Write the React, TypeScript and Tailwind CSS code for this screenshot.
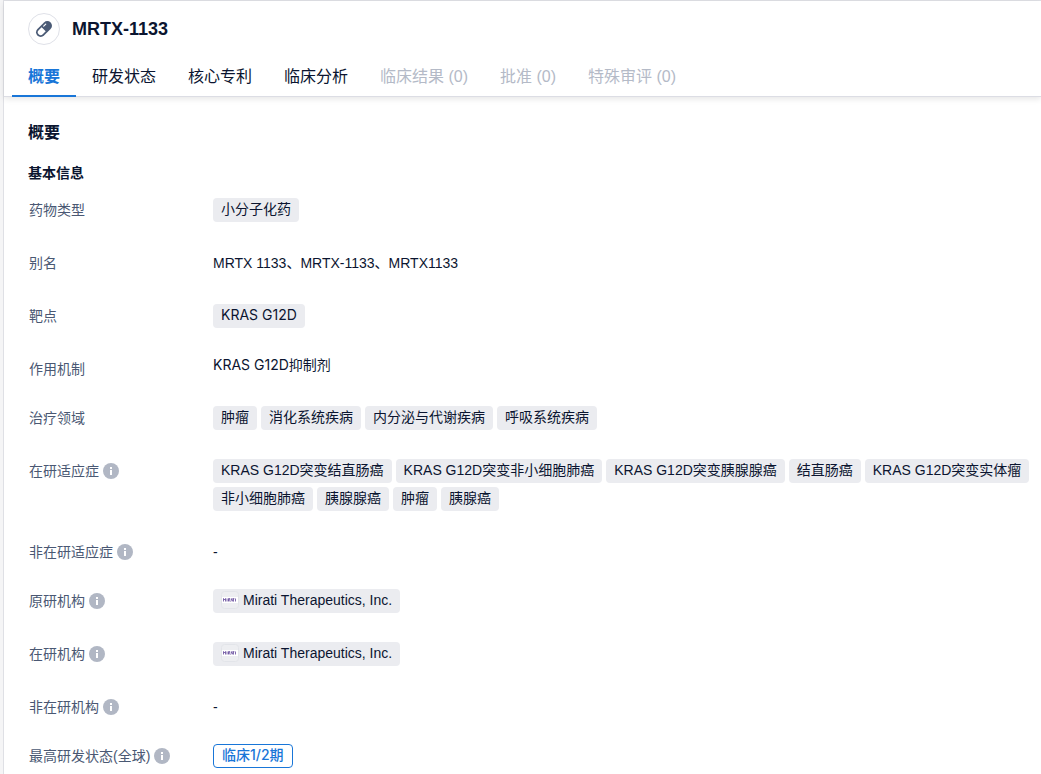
import type { ReactNode } from "react";

const tabs = [
  { label: "概要", state: "active" },
  { label: "研发状态", state: "normal" },
  { label: "核心专利", state: "normal" },
  { label: "临床分析", state: "normal" },
  { label: "临床结果 (0)", state: "disabled" },
  { label: "批准 (0)", state: "disabled" },
  { label: "特殊审评 (0)", state: "disabled" },
];

const tabStyles: Record<string, string> = {
  active: "border-[#1976d8] font-bold text-[#1976d8]",
  normal: "border-transparent text-[#0b1530]",
  disabled: "border-transparent text-[#b4bac7]",
};

function PillIcon() {
  return (
    <svg viewBox="0 0 18 18" className="size-5" aria-hidden="true">
      <g transform="rotate(-45 9 9)">
        <rect x="0.6" y="4.8" width="16.8" height="8.4" rx="4.2" fill="#4a5a75" />
        <path d="M8.6 6.4H4.8a2.6 2.6 0 0 0 0 5.2h3.8z" fill="#fff" />
        <path d="M10.6 7h2.6" stroke="#fff" strokeWidth="1.1" strokeLinecap="round" />
      </g>
    </svg>
  );
}

function InfoIcon() {
  return (
    <svg viewBox="0 0 16 16" className="size-4 shrink-0" aria-hidden="true">
      <circle cx="8" cy="8" r="8" fill="#b1b7c4" />
      <path d="M7 4h2v2H7zM7 7h2v5H7z" fill="#fff" />
    </svg>
  );
}

function MiratiLogo() {
  return (
    <svg viewBox="0 0 18 18" className="size-[18px] shrink-0" aria-hidden="true">
      <rect x="0.5" y="0.5" width="17" height="17" rx="3" fill="#edeef1" stroke="#e2e4e9" />
      <rect x="1" y="6" width="16" height="6" fill="#fff" />
      <path
        d="M2.5 10.5v-3l1 1.5 1-1.5v3M6 7.5v3M7.5 10.5v-3h1.3v1.4H7.5l1.4 1.6M9.8 10.5l1-3 1 3M11.6 7.7h1.8M12.5 7.7v2.8M14.5 7.5v3"
        fill="none"
        stroke="#62469a"
        strokeWidth="0.8"
      />
    </svg>
  );
}

function Tag({ children, className = "" }: { children: ReactNode; className?: string }) {
  return (
    <a
      href="#"
      className={`flex h-6 items-center gap-1 rounded bg-[#ebecf0] px-2 pb-0.5 whitespace-nowrap ${className}`}
    >
      {children}
    </a>
  );
}

function Tags({ items }: { items: string[] }) {
  return (
    <div className="flex flex-wrap gap-1">
      {items.map((item) => (
        <Tag key={item}>{item}</Tag>
      ))}
    </div>
  );
}

function Company() {
  return (
    <div className="flex">
      <Tag>
        <MiratiLogo />
        Mirati Therapeutics, Inc.
      </Tag>
    </div>
  );
}

type RowProps = { label: string; info?: boolean; compact?: boolean; children: ReactNode };

function Row({ label, info = false, compact = false, children }: RowProps) {
  return (
    <div className={`flex ${compact ? "pb-[25px]" : "pb-[29px]"}`}>
      <dt className="flex h-6 w-[184px] shrink-0 items-center gap-1 text-[#4a5873]">
        {label}
        {info && <InfoIcon />}
      </dt>
      <dd className="min-w-0 flex-1">{children}</dd>
    </div>
  );
}

export default function App() {
  return (
    <div className="min-h-screen bg-[#f5f5f6] pl-[3px] font-['Liberation_Sans','Noto_Sans_CJK_SC',sans-serif] text-sm text-[#0b1530]">
      <main className="min-h-screen border-t border-l border-[#dfe0e5] bg-white">
        <header className="border-b border-[#dcdde4] shadow-[0_2px_6px_rgba(0,0,0,0.1)]">
          <div className="flex items-center gap-3 px-6 pt-3">
            <span className="flex size-8 items-center justify-center rounded-full border border-[#dfe1e8]">
              <PillIcon />
            </span>
            <h1 className="text-lg leading-8 font-bold">MRTX-1133</h1>
          </div>
          <nav className="-mb-px flex px-2 pt-3">
            {tabs.map((tab) => (
              <button
                key={tab.label}
                type="button"
                disabled={tab.state === "disabled"}
                className={`h-10 border-b-2 px-4 pt-0.5 text-base whitespace-nowrap ${tabStyles[tab.state]}`}
              >
                {tab.label}
              </button>
            ))}
          </nav>
        </header>

        <section className="pt-6 pr-2 pl-6">
          <h2 className="text-base leading-6 font-bold">概要</h2>
          <h3 className="pt-4 leading-6 font-bold">基本信息</h3>
          <dl className="pt-[13px] pl-px leading-6">
            <Row label="药物类型">
              <Tags items={["小分子化药"]} />
            </Row>
            <Row label="别名">MRTX 1133、MRTX-1133、MRTX1133</Row>
            <Row label="靶点">
              <div className="flex">
                <Tag className="font-['Inter','Noto_Sans_CJK_SC',sans-serif]">KRAS G12D</Tag>
              </div>
            </Row>
            <Row label="作用机制" compact>
              <a
                href="#"
                className="block font-['Inter','Noto_Sans_CJK_SC',sans-serif] leading-4"
              >
                KRAS G12D抑制剂
              </a>
            </Row>
            <Row label="治疗领域">
              <Tags items={["肿瘤", "消化系统疾病", "内分泌与代谢疾病", "呼吸系统疾病"]} />
            </Row>
            <Row label="在研适应症" info>
              <Tags
                items={[
                  "KRAS G12D突变结直肠癌",
                  "KRAS G12D突变非小细胞肺癌",
                  "KRAS G12D突变胰腺腺癌",
                  "结直肠癌",
                  "KRAS G12D突变实体瘤",
                  "非小细胞肺癌",
                  "胰腺腺癌",
                  "肿瘤",
                  "胰腺癌",
                ]}
              />
            </Row>
            <Row label="非在研适应症" info compact>
              -
            </Row>
            <Row label="原研机构" info>
              <Company />
            </Row>
            <Row label="在研机构" info>
              <Company />
            </Row>
            <Row label="非在研机构" info compact>
              -
            </Row>
            <div className="flex">
              <dt className="flex h-6 w-[184px] shrink-0 items-center gap-1 text-[#4a5873]">
                最高研发状态(全球)
                <InfoIcon />
              </dt>
              <dd className="flex">
                <span className="flex h-6 items-center rounded border border-[#1976d8] px-2 pb-0.5 font-['Inter','Noto_Sans_CJK_SC',sans-serif] font-medium text-[#1976d8]">
                  临床1/2期
                </span>
              </dd>
            </div>
          </dl>
        </section>
      </main>
    </div>
  );
}
